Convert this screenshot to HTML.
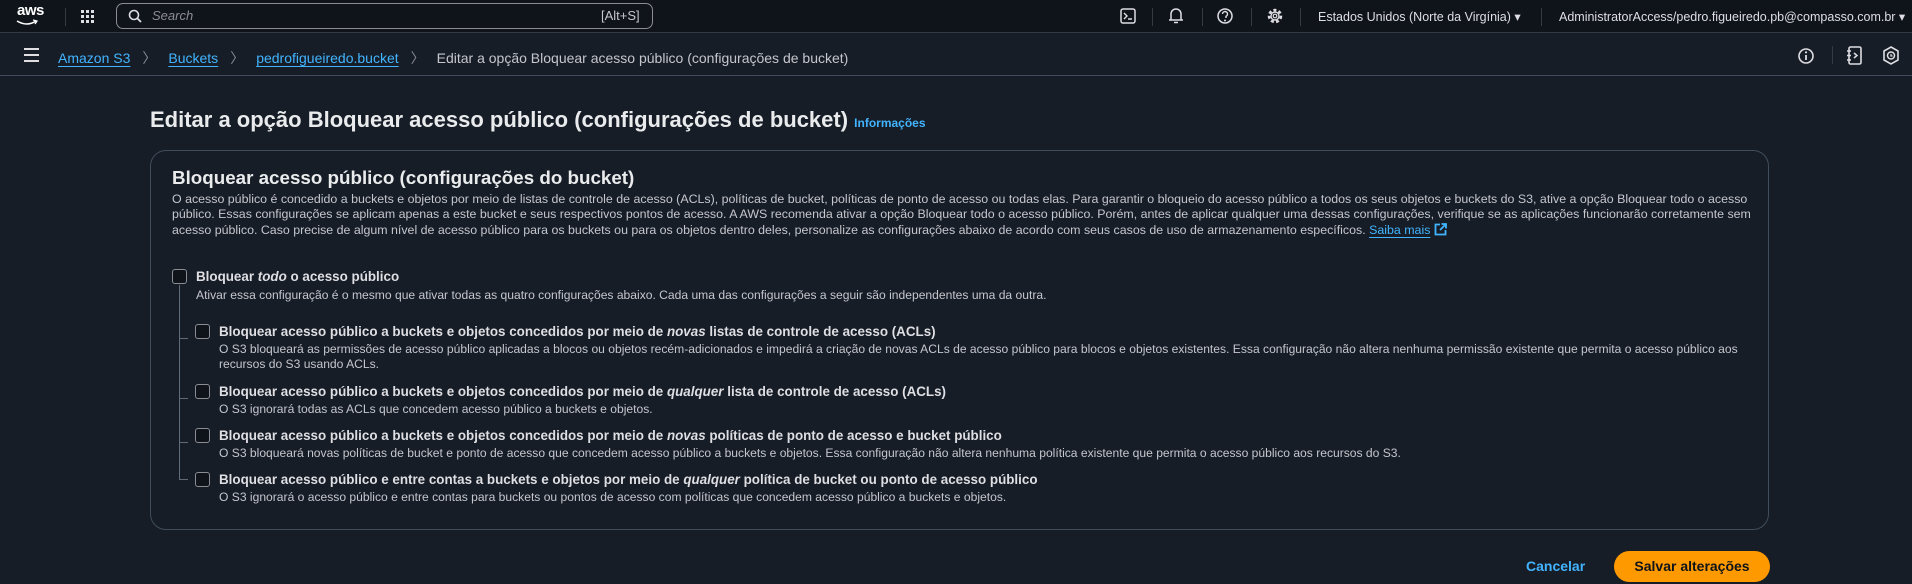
<!DOCTYPE html>
<html><head><meta charset="utf-8"><style>
*{box-sizing:border-box;margin:0;padding:0}
body{width:1912px;height:584px;background:#161d26;font-family:"Liberation Sans",sans-serif;color:#dedee3;position:relative;overflow:hidden}
.a{position:absolute;white-space:nowrap}
.nav{position:absolute;left:0;top:0;width:1912px;height:33px;background:#0f141a;border-bottom:1px solid #333a44}
.bc{position:absolute;left:0;top:33px;width:1912px;height:43px;border-bottom:1px solid #414d5c;background:#161d26}
.link{color:#42b4ff;text-decoration:underline;text-underline-offset:3px}
.sep{position:absolute;top:8px;width:1px;height:18px;background:#333a44}
.box{position:absolute;left:150px;top:150px;width:1619px;height:380px;border:1px solid #414d5c;border-radius:16px}
.cb{position:absolute;width:15px;height:15px;border:1.5px solid #8c8c94;border-radius:3px;background:#0f141a}
.t{font-size:13.4px;font-weight:bold;color:#dedee3}
.d{font-size:12.1px;color:#c6c6cd}
.line{position:absolute;background:#5f6b7a}
svg{position:absolute}
</style></head><body>
<div class="nav">
 <div class="a" style="left:17px;top:2px;font-size:15px;font-weight:bold;color:#fff;letter-spacing:-0.5px">aws</div>
 <svg style="left:16px;top:19px" width="22" height="8"><path d="M1 2 Q11 8 20 2" stroke="#fff" fill="none" stroke-width="1.6"/><path d="M17 1 L21 2 L19 5" stroke="#fff" fill="none" stroke-width="1.3"/></svg>
 <div class="sep" style="left:65px"></div>
 <svg style="left:81px;top:10px" width="14" height="14"><g fill="#dedee3"><rect x="0" y="0" width="3" height="3"/><rect x="5" y="0" width="3" height="3"/><rect x="10" y="0" width="3" height="3"/><rect x="0" y="5" width="3" height="3"/><rect x="5" y="5" width="3" height="3"/><rect x="10" y="5" width="3" height="3"/><rect x="0" y="10" width="3" height="3"/><rect x="5" y="10" width="3" height="3"/><rect x="10" y="10" width="3" height="3"/></g></svg>
 <div style="position:absolute;left:116px;top:3px;width:537px;height:26px;border:1.5px solid #8c8c94;border-radius:7px;background:#0f141a"></div>
 <svg style="left:128px;top:9px" width="14" height="14"><circle cx="6" cy="6" r="4.5" stroke="#dedee3" stroke-width="1.6" fill="none"/><path d="M9.5 9.5 L13 13" stroke="#dedee3" stroke-width="1.8"/></svg>
 <div class="a" style="left:152px;top:8px;font-size:13px;font-style:italic;color:#8c8c94">Search</div>
 <div class="a" style="left:601px;top:8px;font-size:13px;color:#c6c6cd">[Alt+S]</div>
 <svg style="left:1120px;top:8px" width="16" height="16"><rect x="1" y="1" width="14" height="14" rx="2" stroke="#dedee3" stroke-width="1.5" fill="none"/><path d="M4 5 L7 8 L4 11 M8 11 H12" stroke="#dedee3" stroke-width="1.4" fill="none"/></svg>
 <div class="sep" style="left:1152px"></div>
 <svg style="left:1168px;top:7px" width="16" height="18"><path d="M3 13 V7 a5 5 0 0 1 10 0 V13 Z M1 13 H15 M6 15.5 H10" stroke="#dedee3" stroke-width="1.5" fill="none"/></svg>
 <div class="sep" style="left:1202px"></div>
 <svg style="left:1216px;top:7px" width="18" height="18"><circle cx="9" cy="9" r="7" stroke="#dedee3" stroke-width="1.5" fill="none"/><path d="M6.5 7 a2.5 2.5 0 1 1 3.5 2.3 V11" stroke="#dedee3" stroke-width="1.4" fill="none"/><circle cx="9" cy="13.5" r="1" fill="#dedee3"/></svg>
 <div class="sep" style="left:1251px"></div>
 <svg style="left:1266px;top:7px" width="18" height="18"><circle cx="9" cy="9" r="6" stroke="#dedee3" stroke-width="2.5" stroke-dasharray="3 2.3" fill="none"/><circle cx="9" cy="9" r="4" stroke="#dedee3" stroke-width="1.4" fill="none"/><circle cx="9" cy="9" r="1.8" stroke="#dedee3" stroke-width="1.2" fill="none"/></svg>
 <div class="sep" style="left:1300px"></div>
 <div class="a" style="left:1318px;top:9px;font-size:12.5px;color:#dedee3">Estados Unidos (Norte da Virgínia) ▾</div>
 <div class="sep" style="left:1541px"></div>
 <div class="a" style="left:1559px;top:9px;font-size:12.5px;color:#dedee3">AdministratorAccess/pedro.figueiredo.pb@compasso.com.br ▾</div>
</div>
<div class="bc">
 <svg style="left:24px;top:15px" width="15" height="14"><path d="M0 1 H15 M0 7 H15 M0 13 H15" stroke="#dedee3" stroke-width="2"/></svg>
 <div class="a" style="left:58px;top:15px;font-size:14px"><span class="link">Amazon S3</span><span style="color:#8c8c94;margin:0 12px">〉</span><span class="link">Buckets</span><span style="color:#8c8c94;margin:0 12px">〉</span><span class="link">pedrofigueiredo.bucket</span><span style="color:#8c8c94;margin:0 12px">〉</span><span style="color:#c6c6cd">Editar a opção Bloquear acesso público (configurações de bucket)</span></div>
 <svg style="left:1797px;top:14px" width="18" height="18"><circle cx="9" cy="9" r="7" stroke="#dedee3" stroke-width="1.6" fill="none"/><path d="M9 8 V13" stroke="#dedee3" stroke-width="1.8"/><circle cx="9" cy="5.3" r="1.1" fill="#dedee3"/></svg>
 <div class="sep" style="left:1832px;top:13px"></div>
 <svg style="left:1846px;top:13px" width="18" height="20"><rect x="3" y="1" width="12" height="17" rx="1.5" stroke="#dedee3" stroke-width="1.6" fill="none"/><path d="M1 5 H5 M1 9.5 H5 M1 14 H5 M8 7 L11 9.5 L8 12" stroke="#dedee3" stroke-width="1.5" fill="none"/></svg>
 <svg style="left:1882px;top:13px" width="18" height="20"><path d="M9 1 L16 5 V14 L9 18 L2 14 V5 Z" stroke="#dedee3" stroke-width="1.6" fill="none"/><circle cx="9" cy="9.5" r="3.5" stroke="#dedee3" stroke-width="1.5" fill="none"/><path d="M9 8 V10 H10.5" stroke="#dedee3" stroke-width="1.2" fill="none"/></svg>
</div>
<div class="a" style="left:150px;top:107px;font-size:22px;font-weight:bold;color:#e9ebed">Editar a opção Bloquear acesso público (configurações de bucket) <span style="font-size:12px;color:#42b4ff">Informações</span></div>
<div class="box"></div>
<div class="a" style="left:172px;top:167px;font-size:18.8px;font-weight:bold;color:#e9ebed">Bloquear acesso público (configurações do bucket)</div>
<div style="position:absolute;left:172px;top:192px;width:1590px;font-size:12.4px;line-height:14.7px;color:#c6c6cd">O acesso público é concedido a buckets e objetos por meio de listas de controle de acesso (ACLs), políticas de bucket, políticas de ponto de acesso ou todas elas. Para garantir o bloqueio do acesso público a todos os seus objetos e buckets do S3, ative a opção Bloquear todo o acesso público. Essas configurações se aplicam apenas a este bucket e seus respectivos pontos de acesso. A AWS recomenda ativar a opção Bloquear todo o acesso público. Porém, antes de aplicar qualquer uma dessas configurações, verifique se as aplicações funcionarão corretamente sem acesso público. Caso precise de algum nível de acesso público para os buckets ou para os objetos dentro deles, personalize as configurações abaixo de acordo com seus casos de uso de armazenamento específicos. <span class="link">Saiba mais</span> <svg style="position:relative;top:2px" width="13" height="13"><path d="M6 1.5 H1.5 V11.5 H11.5 V7 M7.5 1 H12 V5.5 M12 1 L6 7" stroke="#42b4ff" stroke-width="1.8" fill="none"/></svg></div>
<div class="line" style="left:179px;top:285px;width:1px;height:194px"></div>
<div class="line" style="left:179px;top:338px;width:9px;height:1px"></div>
<div class="line" style="left:179px;top:398px;width:9px;height:1px"></div>
<div class="line" style="left:179px;top:442px;width:9px;height:1px"></div>
<div class="line" style="left:179px;top:479px;width:9px;height:1px"></div>
<div class="cb" style="left:172px;top:269px"></div>
<div class="a t" style="left:196px;top:269px">Bloquear <i>todo</i> o acesso público</div>
<div class="a d" style="left:196px;top:288px">Ativar essa configuração é o mesmo que ativar todas as quatro configurações abaixo. Cada uma das configurações a seguir são independentes uma da outra.</div>
<div class="cb" style="left:195px;top:324px"></div>
<div class="a t" style="left:219px;top:324px">Bloquear acesso público a buckets e objetos concedidos por meio de <i>novas</i> listas de controle de acesso (ACLs)</div>
<div style="position:absolute;left:219px;top:342px;width:1545px;font-size:12.1px;line-height:14.7px;color:#c6c6cd">O S3 bloqueará as permissões de acesso público aplicadas a blocos ou objetos recém-adicionados e impedirá a criação de novas ACLs de acesso público para blocos e objetos existentes. Essa configuração não altera nenhuma permissão existente que permita o acesso público aos recursos do S3 usando ACLs.</div>
<div class="cb" style="left:195px;top:384px"></div>
<div class="a t" style="left:219px;top:384px">Bloquear acesso público a buckets e objetos concedidos por meio de <i>qualquer</i> lista de controle de acesso (ACLs)</div>
<div class="a d" style="left:219px;top:402px">O S3 ignorará todas as ACLs que concedem acesso público a buckets e objetos.</div>
<div class="cb" style="left:195px;top:428px"></div>
<div class="a t" style="left:219px;top:428px">Bloquear acesso público a buckets e objetos concedidos por meio de <i>novas</i> políticas de ponto de acesso e bucket público</div>
<div class="a d" style="left:219px;top:446px">O S3 bloqueará novas políticas de bucket e ponto de acesso que concedem acesso público a buckets e objetos. Essa configuração não altera nenhuma política existente que permita o acesso público aos recursos do S3.</div>
<div class="cb" style="left:195px;top:472px"></div>
<div class="a t" style="left:219px;top:472px">Bloquear acesso público e entre contas a buckets e objetos por meio de <i>qualquer</i> política de bucket ou ponto de acesso público</div>
<div class="a d" style="left:219px;top:490px">O S3 ignorará o acesso público e entre contas para buckets ou pontos de acesso com políticas que concedem acesso público a buckets e objetos.</div>
<div class="a" style="left:1526px;top:558px;font-size:14px;font-weight:bold;color:#42b4ff">Cancelar</div>
<div style="position:absolute;left:1614px;top:551px;width:156px;height:31px;border-radius:16px;background:#ff9900;color:#0f141a;font-size:14px;font-weight:bold;text-align:center;line-height:31px">Salvar alterações</div>
</body></html>
